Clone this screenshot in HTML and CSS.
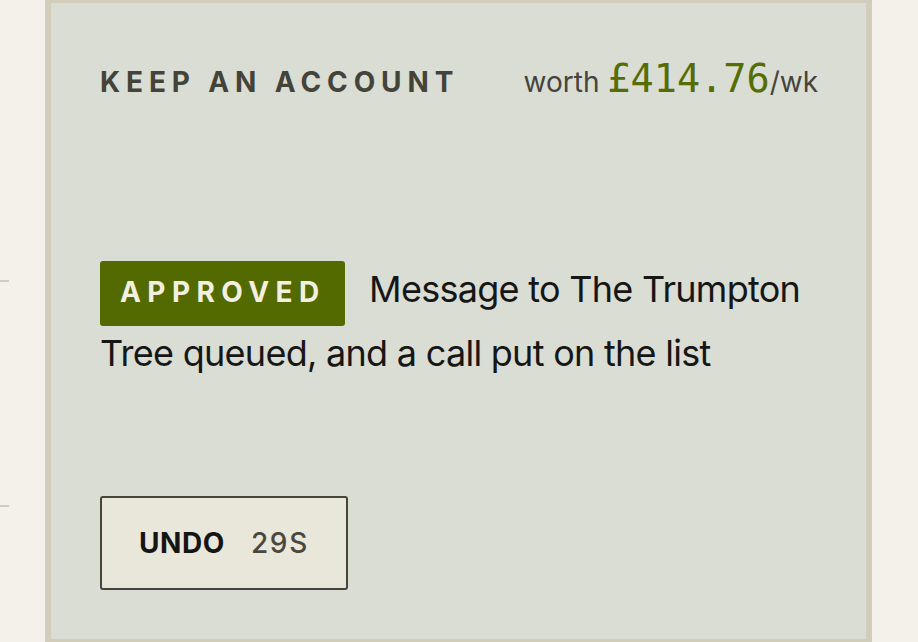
FILE: index.html
```html
<!DOCTYPE html>
<html lang="en">
<head>
<meta charset="utf-8">
<title>Keep an account</title>
<link rel="stylesheet" href="styles.css">
</head>
<body>
<div class="page">
  <aside class="side side-left">
    <div class="rule rule-first"></div>
    <div class="rule rule-second"></div>
  </aside>
  <section class="card">
    <header class="card-head">
      <h2 class="title">KEEP AN ACCOUNT</h2>
      <div class="worth">worth <span class="price">£414.76</span>/wk</div>
    </header>
    <p class="message"><span class="badge">APPROVED</span> Message to The Trumpton Tree queued, and a call put on the list</p>
    <button class="undo" type="button"><span class="undo-label">UNDO</span><span class="undo-count">29S</span></button>
  </section>
  <aside class="side side-right"></aside>
</div>
</body>
</html>
```

FILE: styles.css
```css
* { box-sizing: border-box; }

html, body {
  margin: 0;
  padding: 0;
  height: 100%;
  overflow: hidden;
}

body {
  background: #f3f1e9;
  font-family: "Inter", "Liberation Sans", sans-serif;
  color: #161616;
}

.page {
  display: flex;
  height: 642px;
}

.side {
  background: #f3f1e9;
}

.side-left {
  width: 45px;
  flex: none;
  display: flex;
  flex-direction: column;
}

.rule {
  width: 9px;
  height: 2px;
  background: #d2ccbb;
}

.rule-first { margin-top: 280px; }
.rule-second { margin-top: 223px; }

.side-right {
  flex: 1;
}

.card {
  width: 827px;
  flex: none;
  height: 642px;
  background: #d9ddd3;
  border-style: solid;
  border-color: #d2ccbb;
  border-width: 3px 6px;
  padding: 48px 48px 49px 49px;
  display: flex;
  flex-direction: column;
}

.card-head {
  display: flex;
  justify-content: space-between;
  align-items: baseline;
  line-height: 55px;
}

.title {
  margin: 0;
  font-size: 28px;
  line-height: 42px;
  font-weight: 700;
  letter-spacing: 0.21em;
  color: #44433a;
}

.worth {
  font-size: 28px;
  color: #45443c;
}

.price {
  font-family: "DejaVu Sans Mono", "Liberation Mono", monospace;
  font-size: 38.5px;
  color: #566c05;
}

.message {
  margin: 151px 0 0;
  font-size: 36px;
  line-height: 54px;
  letter-spacing: -0.02em;
  color: #161616;
}

.badge {
  display: inline-block;
  background: #536a00;
  color: #f3f0e0;
  font-size: 28px;
  font-weight: 700;
  letter-spacing: 0.23em;
  line-height: 28px;
  padding: 17px 19px 20px 20px;
  border-radius: 3px;
  margin-right: 15px;
}

.undo {
  margin-top: auto;
  align-self: flex-start;
  display: flex;
  align-items: baseline;
  gap: 26px;
  background: #e9e6da;
  border: 2px solid #47453b;
  border-radius: 3px;
  padding: 24px 37px 24px 37px;
  font-family: "Inter", "Liberation Sans", sans-serif;
  font-size: 28px;
  line-height: 42px;
  cursor: pointer;
}

.undo-label {
  font-weight: 700;
  color: #151515;
  letter-spacing: 0.02em;
}

.undo-count {
  font-weight: 500;
  color: #4a483e;
  letter-spacing: 0.06em;
}
```
